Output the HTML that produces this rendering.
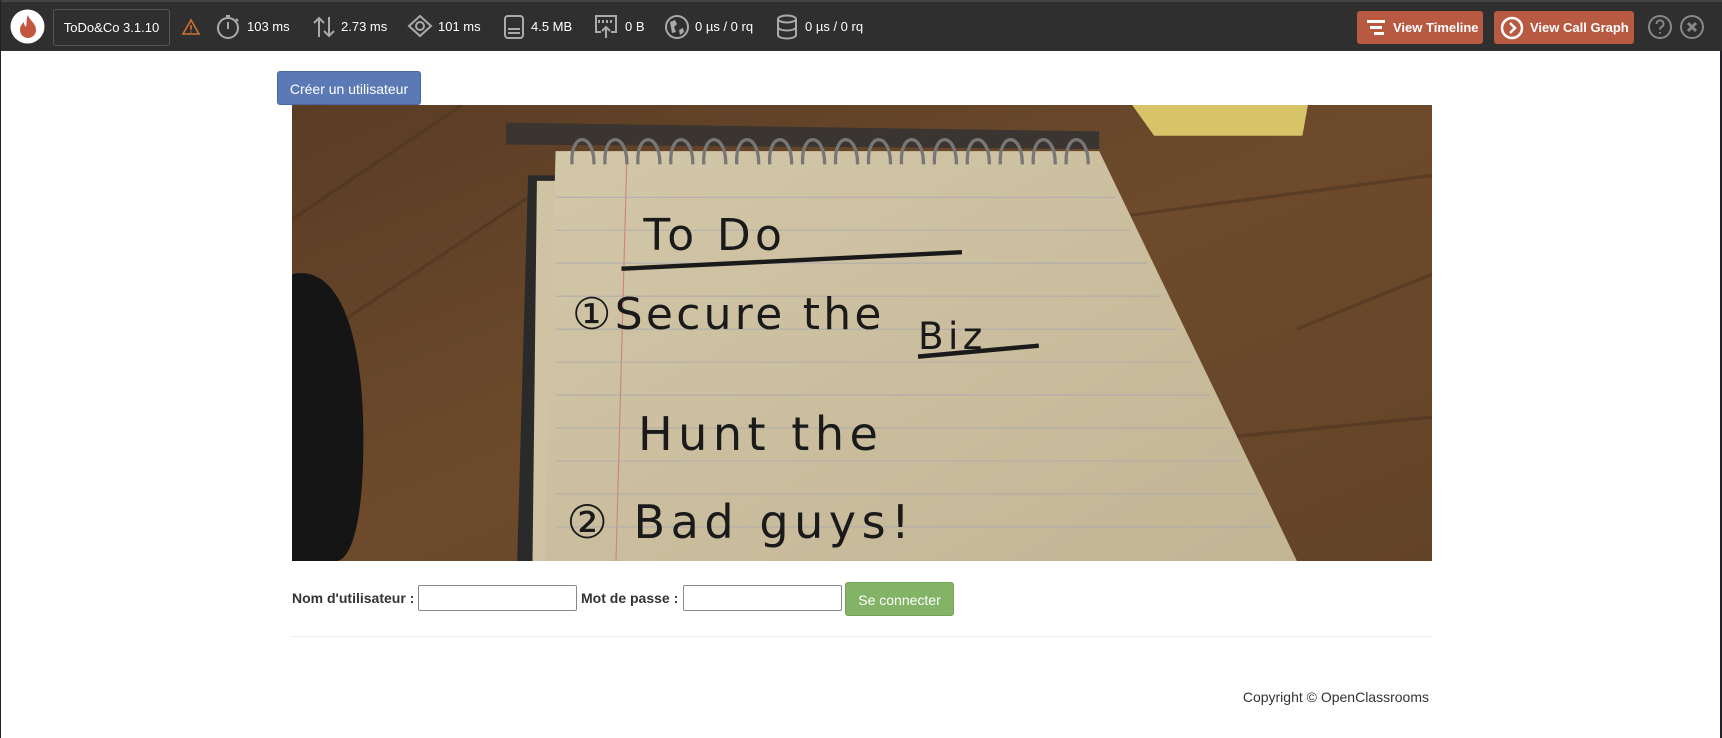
<!DOCTYPE html>
<html><head><meta charset="utf-8"><style>
*{box-sizing:border-box}
body{margin:0;width:1722px;height:738px;overflow:hidden;background:#fff;font-family:"Liberation Sans",Arial,sans-serif;position:relative;border-left:1px solid #223;border-right:2px solid #223}
.tb{position:absolute;left:0;top:0;width:1722px;height:51px;background:#2f2f2f;border-top:2px solid #444;color:#fff;font-size:13px}
.tb .it{position:absolute;top:16px;line-height:18px}
.ico{position:absolute;top:13px}
.ver{position:absolute;left:52px;top:7px;width:117px;height:37px;border:1px solid #555;border-radius:3px;line-height:35px;text-align:center;font-size:13px}
.rb{position:absolute;top:9px;height:33px;background:#b85a42;border-radius:3px;font-weight:bold;font-size:13px;line-height:33px;color:#fff}
.btn{position:absolute;color:#fff;font-size:14px;border-radius:3px;text-align:center}
label{position:absolute;font-weight:bold;font-size:14px;color:#333;top:590px}
.in{position:absolute;top:585px;height:26px;border:1px solid #888;border-radius:2px;background:#fff}
</style></head><body>
<div class="tb">
<svg class="ico" style="left:9px;top:7px" width="35" height="35"><circle cx="17.5" cy="17.5" r="17" fill="#fff"/><path d="M18 6c1 5 8 8 8 15a8 8 0 0 1-16 0c0-4 2-6 4-8 0 3 1 4 2 5 1-4 0-8 2-12z" fill="#c0573e"/></svg>
<div class="ver">ToDo&amp;Co 3.1.10</div>
<svg class="ico" style="left:180px;top:16px" width="20" height="18"><path d="M10 2L18 16H2z" fill="none" stroke="#d07030" stroke-width="1.6"/><path d="M10 7v5M10 13.5v1" stroke="#d07030" stroke-width="1.6"/></svg>
<svg class="ico" style="left:215px;top:12px" width="26" height="26" fill="none" stroke="#aaa" stroke-width="2"><circle cx="12" cy="14" r="10"/><path d="M12 8v7M10 2h4M20 5l2 2"/></svg>
<div class="it" style="left:246px">103 ms</div>
<svg class="ico" style="left:311px;top:13px" width="24" height="24" fill="none" stroke="#aaa" stroke-width="2"><path d="M7 22V3M2 8l5-5 5 5M17 2v19M12 16l5 5 5-5"/></svg>
<div class="it" style="left:340px">2.73 ms</div>
<svg class="ico" style="left:405px;top:12px" width="28" height="26" fill="none" stroke="#aaa" stroke-width="2"><path d="M14 2l11 10-11 10L3 12z"/><circle cx="14" cy="12" r="4"/></svg>
<div class="it" style="left:437px">101 ms</div>
<svg class="ico" style="left:502px;top:12px" width="22" height="26" fill="none" stroke="#aaa" stroke-width="2"><rect x="2" y="2" width="18" height="22" rx="3"/><path d="M5 15h12M5 19h12"/></svg>
<div class="it" style="left:530px">4.5 MB</div>
<svg class="ico" style="left:593px;top:12px" width="24" height="26" fill="none" stroke="#aaa" stroke-width="2"><path d="M7 18H2V2h20v16h-5M5 6v3M9 6v3M13 6v3M17 6v3M12 24V13M8 17l4-4 4 4"/></svg>
<div class="it" style="left:624px">0 B</div>
<svg class="ico" style="left:663px;top:12px" width="26" height="26"><circle cx="13" cy="13" r="11" fill="none" stroke="#aaa" stroke-width="2"/><path d="M6 8l5-2 2 4-3 3 2 5-4 1zM15 16l4-2 1 4-4 3z" fill="#aaa"/></svg>
<div class="it" style="left:694px">0 µs / 0 rq</div>
<svg class="ico" style="left:774px;top:12px" width="24" height="26" fill="none" stroke="#aaa" stroke-width="2"><ellipse cx="12" cy="5" rx="9" ry="3.5"/><path d="M3 5v16c0 2 4 3.5 9 3.5s9-1.5 9-3.5V5M3 13c0 2 4 3.5 9 3.5s9-1.5 9-3.5"/></svg>
<div class="it" style="left:804px">0 µs / 0 rq</div>
<div class="rb" style="left:1356px;width:126px"><svg style="position:absolute;left:10px;top:8px" width="20" height="18" fill="#fff"><rect x="0" y="1" width="18" height="3"/><rect x="3" y="7" width="12" height="3"/><rect x="7" y="13" width="10" height="3"/></svg><span style="position:absolute;left:36px">View Timeline</span></div>
<div class="rb" style="left:1493px;width:140px"><svg style="position:absolute;left:6px;top:5px" width="24" height="24" fill="none" stroke="#fff" stroke-width="2.5"><circle cx="12" cy="12" r="10"/><path d="M10 7l5 5-5 5"/></svg><span style="position:absolute;left:36px">View Call Graph</span></div>
<svg class="ico" style="left:1646px;top:12px" width="26" height="26" fill="none" stroke="#888" stroke-width="2"><circle cx="13" cy="13" r="11"/><path d="M9.5 10a3.5 3.5 0 1 1 5 3c-1 .6-1.5 1.2-1.5 2.5M13 18v1.5"/></svg>
<svg class="ico" style="left:1678px;top:12px" width="26" height="26" fill="none" stroke="#888" stroke-width="2"><circle cx="13" cy="13" r="11"/><path d="M9 9l8 8M17 9l-8 8" stroke-width="3"/></svg>
</div>
<div class="btn" style="left:276px;top:71px;width:144px;height:34px;line-height:34px;background:#5b7ab5;border:1px solid #4a68a0">Créer un utilisateur</div>
<svg style="position:absolute;left:291px;top:105px" width="1140" height="456" viewBox="265 96 1038 415" preserveAspectRatio="none">
<defs><linearGradient id="w" x1="0" y1="0" x2="1" y2="1"><stop offset="0" stop-color="#5a3d25"/><stop offset=".5" stop-color="#6d4a2b"/><stop offset="1" stop-color="#634328"/></linearGradient>
<linearGradient id="p" x1="0" y1="0" x2="1" y2="1"><stop offset="0" stop-color="#d2c7a8"/><stop offset="1" stop-color="#c2b594"/></linearGradient></defs>
<rect x="265" y="96" width="1038" height="415" fill="url(#w)"/>
<path d="M265 200L420 96M300 300L480 180M1000 200L1303 160M1100 400L1303 380M1180 300L1303 250" stroke="#4a3220" stroke-width="3" opacity=".5"/>
<path d="M1030 96h160l-5 28H1050z" fill="#d8c468"/>
<path d="M480 160h30v351h-40z" fill="#2a2a2a"/>
<path d="M488 165h18v346h-22z" fill="#cfc3a3"/>
<path d="M505 138L1000 138L1180 511L495 511z" fill="url(#p)"/>
<path d="M570 140L560 511" stroke="#d08080" stroke-width="1"/>
<g stroke="#a8a6b0" stroke-width="1" opacity=".7"><path d="M505 180H1015M505 210H1028M505 240H1043M505 270H1057M505 300H1071M505 330H1086M505 360H1100M505 390H1115M505 420H1130M505 450H1144M505 480H1158"/></g>
<path d="M460 112L1000 120L1000 136L460 132z" fill="#3a3530"/>
<g fill="none" stroke="#777" stroke-width="3"><path d="M520 150c-2-30 20-30 20 0M550 150c-2-30 20-30 20 0M580 150c-2-30 20-30 20 0M610 150c-2-30 20-30 20 0M640 150c-2-30 20-30 20 0M670 150c-2-30 20-30 20 0M700 150c-2-30 20-30 20 0M730 150c-2-30 20-30 20 0M760 150c-2-30 20-30 20 0M790 150c-2-30 20-30 20 0M820 150c-2-30 20-30 20 0M850 150c-2-30 20-30 20 0M880 150c-2-30 20-30 20 0M910 150c-2-30 20-30 20 0M940 150c-2-30 20-30 20 0M970 150c-2-30 20-30 20 0"/></g>
<path d="M265 250c45-10 65 60 65 150s-15 111-25 111h-40z" fill="#151515"/>
<g font-family="'DejaVu Sans',sans-serif" fill="#1a1a1a">
<text x="585" y="228" font-size="40" letter-spacing="4">To Do</text>
<text x="520" y="300" font-size="40" letter-spacing="3">①Secure the</text>
<text x="835" y="318" font-size="34" letter-spacing="4">Biz</text>
<text x="580" y="410" font-size="42" letter-spacing="5">Hunt the</text>
<text x="515" y="490" font-size="42" letter-spacing="5">② Bad guys!</text></g>
<path d="M565 245L875 230M835 325L945 315" stroke="#1a1a1a" stroke-width="4"/>
</svg>
<label style="left:291px">Nom d'utilisateur :</label>
<div class="in" style="left:417px;width:159px"></div>
<label style="left:580px">Mot de passe :</label>
<div class="in" style="left:682px;width:159px"></div>
<div class="btn" style="left:844px;top:582px;width:109px;height:34px;line-height:34px;background:#82b366;border:1px solid #73a358">Se connecter</div>
<div style="position:absolute;left:291px;top:636px;width:1140px;border-top:1px solid #eee"></div>
<div style="position:absolute;right:291px;top:689px;font-size:14px;color:#333">Copyright © OpenClassrooms</div>
</body></html>
